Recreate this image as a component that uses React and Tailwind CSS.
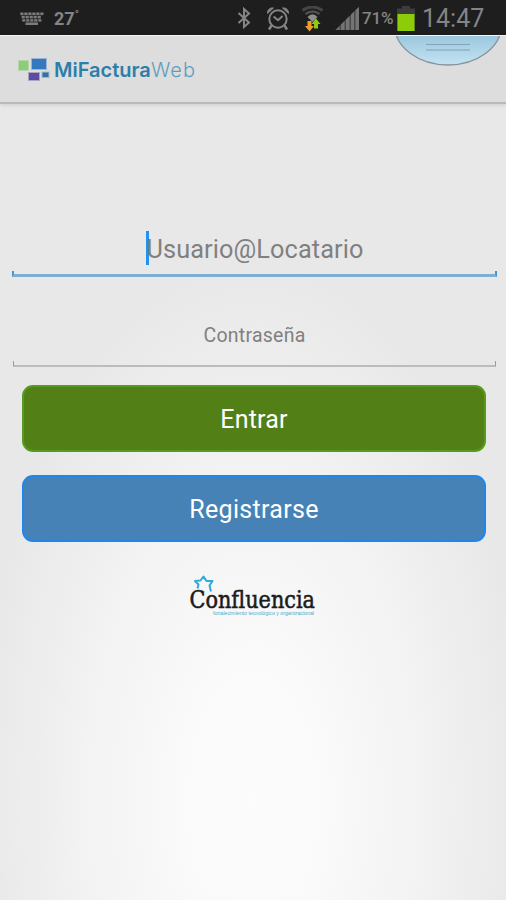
import React from 'react';

const KeyboardIcon = () => (
  <svg width="24" height="14" viewBox="0 0 24 14" fill="#7c7c7c">
    {[0, 4, 8, 12, 16, 20].map(x => <rect key={`a${x}`} x={x + 0.3} y="0.5" width="3.2" height="2.6" />)}
    {[1, 5, 9, 13, 17].map(x => <rect key={`b${x}`} x={x + 0.6} y="3.8" width="3.2" height="2.6" />)}
    {[2, 6, 10, 14, 18].map(x => <rect key={`c${x}`} x={x + 0.2} y="7.2" width="3.2" height="2.4" />)}
    <rect x="5.5" y="10.4" width="12.5" height="2.6" />
  </svg>
);

const BluetoothIcon = () => (
  <svg width="14" height="22" viewBox="0 0 14 22" fill="none" stroke="#858585" strokeWidth="2">
    <path d="M1.5 6 L12 15.5 L7 20 V2 L12 6.5 L1.5 16" />
  </svg>
);

const AlarmIcon = () => (
  <svg width="24" height="25" viewBox="0 0 24 25" fill="none" stroke="#858585" strokeWidth="2">
    <circle cx="12" cy="13" r="8.7" />
    <path d="M7.6 10.5 L12 14.2 L16.6 10" />
    <path d="M1.5 7.5 C1.5 3.5 4 1.5 7.5 2 Z M22.5 7.5 C22.5 3.5 20 1.5 16.5 2 Z" fill="#858585" strokeWidth="1" />
    <path d="M5.5 19.5 L3 23.5 M18.5 19.5 L21 23.5" strokeWidth="2.5" />
  </svg>
);

const WifiIcon = () => (
  <svg width="24" height="26" viewBox="0 0 24 26" fill="none">
    <path d="M2.5 4.5 Q12.5 -2.5 22.5 4.5" stroke="#454545" strokeWidth="3" />
    <path d="M5.5 8 Q12.5 3 19.5 8" stroke="#505050" strokeWidth="2.5" />
    <path d="M7.5 11 Q12.5 5.5 17.5 11 L12.5 16 Z" fill="#8f8f8f" />
    <path d="M7.5 15 H11.5 V20 H14 L9.5 25.5 L5 20 H7.5 Z" fill="#f39a2c" />
    <path d="M14 22.5 V18 H11.5 L16 12.5 L20.5 18 H18 V22.5 Z" fill="#8ccc12" />
  </svg>
);

const SignalIcon = () => (
  <svg width="24" height="23" viewBox="0 0 24 23" fill="#747474">
    <path d="M0 23 L24 0 V23 Z" fill="#484848" />
    <path d="M1 23 L4.5 19 V23 Z M6 23 V17.5 L9.5 14 V23 Z M11 23 V12.5 L14.5 9 V23 Z M16 23 V7.5 L19 4.5 V23 Z M20.5 23 V3 L24 0 V23 Z" />
  </svg>
);

const BatteryIcon = () => (
  <svg width="18" height="25" viewBox="0 0 18 25">
    <rect x="5" y="0" width="8" height="4" fill="#3d3d3d" />
    <rect x="0" y="2.5" width="18" height="22.5" fill="#3d3d3d" />
    <rect x="0.5" y="8" width="17" height="17" fill="#8dcc08" />
  </svg>
);

const StatusBar = () => (
  <div className="flex h-[35px] items-start bg-[#1e1e1e] font-[Roboto,sans-serif] text-[#858585]">
    <div className="ml-5 mt-3"><KeyboardIcon /></div>
    <div className="ml-[10px] mt-[9px] text-[18px] font-bold leading-5">27<span className="align-top text-[11px] leading-3">°</span></div>
    <div className="ml-auto mt-[7px]"><BluetoothIcon /></div>
    <div className="ml-[15px] mt-[6px]"><AlarmIcon /></div>
    <div className="ml-[10px] mt-[6px]"><WifiIcon /></div>
    <div className="ml-[11px] mt-[7px] w-6"><SignalIcon /></div>
    <div className="ml-[3px] mt-[8px] w-[33px] whitespace-nowrap text-[17px] font-medium leading-5 tracking-[-0.2px]">71%</div>
    <div className="ml-[2px] mt-[6px]"><BatteryIcon /></div>
    <div className="ml-[7px] mt-[5px] w-[84px] whitespace-nowrap text-[25px] leading-7">14:47</div>
  </div>
);

const BrandMark = () => (
  <svg width="32" height="24" viewBox="0 0 32 24">
    <rect x="0.5" y="2.5" width="10" height="10" fill="#8dcc78" stroke="#b5d5ac" />
    <rect x="13.5" y="0.5" width="15" height="11" fill="#3478bf" stroke="#9ab4d2" />
    <rect x="10.5" y="14.5" width="11" height="8" fill="#5c4ba3" stroke="#aaa3c5" />
    <rect x="24" y="14" width="7" height="5.5" fill="#3471a5" stroke="#a2bacd" />
  </svg>
);

const AppBar = () => (
  <div className="relative flex h-[69px] flex-none items-start overflow-hidden border-b-2 border-t border-b-[#b9b9b9] border-t-[#f4f4f4] bg-[#dddddd] shadow-[0_1px_4px_rgba(0,0,0,0.12)]">
    <div className="ml-[18px] mt-[22px]"><BrandMark /></div>
    <div className="ml-[4px] mt-[22px] flex whitespace-nowrap font-[Inter,sans-serif] text-[20px] leading-6">
      <span className="w-[97px] font-semibold text-[#2c7fa8]">MiFactura</span>
      <span className="font-light tracking-[1px] text-[#5f9dbc]">Web</span>
    </div>
    {/* Pull-down handle hanging from the top edge */}
    <svg className="absolute right-[4px] top-0" width="110" height="32" viewBox="0 0 110 32">
      <defs>
        <linearGradient id="handle" x1="0" y1="0" x2="0" y2="1">
          <stop offset="0.6" stopColor="#98c4dc" />
          <stop offset="1" stopColor="#c4e3f2" />
        </linearGradient>
      </defs>
      <ellipse cx="56" cy="-11" rx="53.5" ry="40" fill="url(#handle)" stroke="#87929a" strokeWidth="1.3" />
      <path d="M34 8.5 H78 M34 14 H78" stroke="#7fa3b8" />
    </svg>
  </div>
);

const Field = ({ label, active }) => (
  <div className={`flex items-center justify-center pl-[3px] ${active ? 'h-[62px] text-[25.3px]' : 'h-[72px] pt-[2px] text-[19.5px]'}`}>
    {active && <div className="h-[34px] w-[3px] bg-[#2491f5]" />}
    <span className={`whitespace-nowrap text-[#808080] ${active ? '-ml-[2px] pt-[4px] tracking-[0.1px]' : 'tracking-[0.25px]'}`}>{label}</span>
  </div>
);

const Underline = ({ active }) => (
  <div className={active
    ? 'ml-3 mr-[9px] h-[6px] border-x-2 border-b-[3px] border-x-[#4d94c4] border-b-[#7eafd2]'
    : 'ml-[13px] mr-[10px] h-[6px] border-x border-b-2 border-x-[#999999] border-b-[#bcbcbc]'} />
);

const Confluencia = () => (
  <svg className="overflow-visible" width="128" height="44" viewBox="0 0 128 44">
    <path d="M8.5 13.5 L9.5 9.5 L6 6 L11.5 5.5 L14.5 1.5 L17.5 6 L23.5 6 L20.5 10.5 L22 16.5" fill="none" stroke="#2da9dc" strokeWidth="2" strokeLinejoin="round" />
    <text x="0.5" y="33" textLength="125.5" lengthAdjust="spacingAndGlyphs" fontFamily="DejaVu Serif, serif" fontSize="25" fill="#1c1c1c" stroke="#1c1c1c" strokeWidth="0.6">Confluencia</text>
    <text x="24" y="39.5" textLength="101" lengthAdjust="spacingAndGlyphs" fontFamily="Liberation Sans, sans-serif" fontSize="5" fill="#49acc9">fortalecimiento tecnológico y organizacional</text>
  </svg>
);

const App = () => (
  <div className="flex h-[900px] w-[506px] flex-col overflow-hidden bg-[#e7e7e7] bg-[radial-gradient(ellipse_275px_540px_at_253px_800px,#fcfcfc_0%,#fafafa_25%,#f3f3f3_60%,#e8e8e8_100%)] font-[Roboto,sans-serif]">
    <StatusBar />
    <AppBar />
    <div className="flex flex-col pt-[113px]">
      <div className="-mb-[8px]"><Field label="Usuario@Locatario" active /></div>
      <Underline active />
      <div className="mt-[22px]"><Field label="Contraseña" /></div>
      <div className="-mt-[10px]"><Underline /></div>
      <div className="mt-[18px] flex flex-col gap-[23px] pl-[22px] pr-[20px]">
        <button className="h-[67px] rounded-[11px] border-2 border-[#589b1c] bg-[#537f17] pt-[3px] text-[25px] tracking-[0.2px] text-white">Entrar</button>
        <button className="h-[67px] rounded-[11px] border-2 border-[#2186ec] bg-[#4682b6] pt-[3px] text-[25px] tracking-[0.3px] text-white">Registrarse</button>
      </div>
      <div className="mt-[33px] flex justify-center"><Confluencia /></div>
    </div>
  </div>
);

export default App;
